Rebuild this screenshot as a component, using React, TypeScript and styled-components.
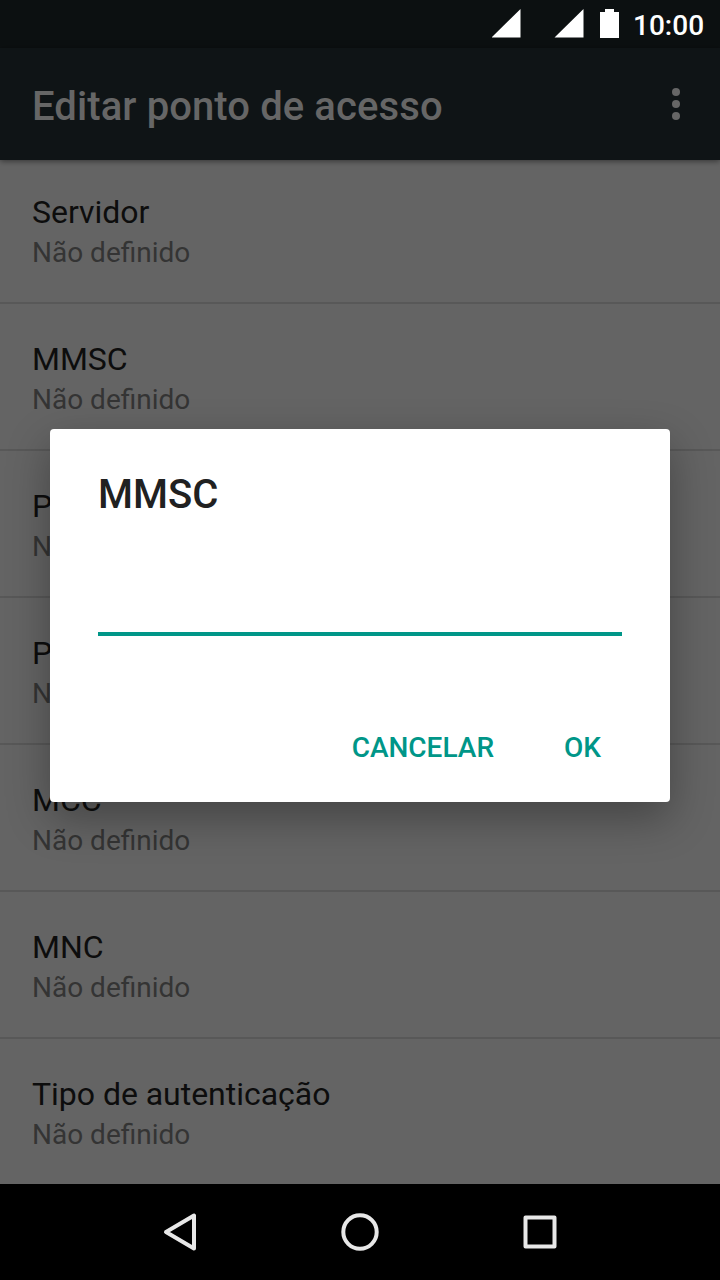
import React from 'react';
import styled, { createGlobalStyle } from 'styled-components';

const GlobalStyle = createGlobalStyle`
  * { box-sizing: border-box; }
  body { margin: 0; background: #000; font-family: Roboto, sans-serif; }
`;
const Screen = styled.div`
  position: relative;
  width: 720px;
  height: 1280px;
  overflow: hidden;
  display: flex;
  flex-direction: column;
  background: #646464;
`;
const StatusBar = styled.header`
  height: 48px;
  flex: none;
  display: flex;
  justify-content: flex-end;
  background: #0c1011;
`;
const StatusIcons = styled.svg`
  display: block;
  width: 140px;
  height: 48px;
`;
const Clock = styled.time`
  width: 88px;
  padding-left: 1px;
  color: #fff;
  font-size: 28px;
  font-weight: 500;
  line-height: 52px;
  white-space: nowrap;
`;
const Toolbar = styled.div`
  height: 112px;
  flex: none;
  display: flex;
  align-items: center;
  justify-content: space-between;
  padding: 6px 32px 0;
  background: #0f1416;
  box-shadow: 0 1px 6px rgba(0, 0, 0, 0.5);
  z-index: 1;
`;
const Title = styled.h1`
  margin: 0;
  color: #666;
  font-size: 40px;
  line-height: 48px;
  font-weight: 500;
  letter-spacing: 0.1px;
`;
const MenuDots = styled.svg`
  width: 24px;
  height: 48px;
`;
const List = styled.main`
  flex: 1;
  margin-top: -3px;
  overflow: hidden;
`;
const Row = styled.section`
  height: 147px;
  padding: 36px 32px 0;
  border-bottom: 2px solid #585858;
`;
const RowTitle = styled.div`
  color: #0d0d0d;
  font-size: 32px;
  line-height: 38px;
  letter-spacing: -0.03px;
`;
const RowValue = styled.div`
  margin-top: 5px;
  color: #343434;
  font-size: 28px;
  line-height: 34px;
  font-variant-ligatures: common-ligatures;
`;
const NavBar = styled.nav`
  height: 96px;
  flex: none;
  display: flex;
  justify-content: center;
  background: #000;
`;
const NavIcon = styled.svg`
  width: 180px;
  height: 96px;
`;
const Dialog = styled.div`
  position: absolute;
  left: 50px;
  top: 429px;
  width: 620px;
  height: 373px;
  display: flex;
  flex-direction: column;
  padding: 42px 48px 0;
  border-radius: 4px;
  background: #fff;
  box-shadow: 0 16px 44px rgba(0, 0, 0, 0.32);
  z-index: 2;
`;
const DialogTitle = styled.h2`
  margin: 0;
  color: #212121;
  font-size: 40px;
  line-height: 48px;
  font-weight: 500;
`;
const Field = styled.div`
  height: 117px;
  border-bottom: 4px solid #009688;
`;
const Actions = styled.div`
  display: flex;
  justify-content: flex-end;
  gap: 70px;
  padding: 95px 21px 0 0;
`;
const Action = styled.div`
  color: #009688;
  font-size: 28px;
  line-height: 34px;
  font-weight: 500;
`;

const settings = ['Servidor', 'MMSC', 'Proxy', 'Porta', 'MCC', 'MNC', 'Tipo de autenticação'];

export default function App() {
  return (
    <Screen>
      <GlobalStyle />
      <StatusBar>
        <StatusIcons viewBox="492 0 140 48" fill="#fff">
          <path d="M520.500 9v28.500h-29zM583.500 9v28.500h-29zM605 9h9v3h5v26h-19V12h5z" />
        </StatusIcons>
        <Clock>10:00</Clock>
      </StatusBar>
      <Toolbar>
        <Title>Editar ponto de acesso</Title>
        <MenuDots viewBox="0 0 24 48" fill="#666">
          <circle cx="12" cy="9" r="4" />
          <circle cx="12" cy="21" r="4" />
          <circle cx="12" cy="33" r="4" />
        </MenuDots>
      </Toolbar>
      <List>
        {settings.map((name) => (
          <Row key={name}>
            <RowTitle>{name}</RowTitle>
            <RowValue>Não definido</RowValue>
          </Row>
        ))}
      </List>
      <NavBar>
        <NavIcon viewBox="90 1184 180 96" fill="none" stroke="#e8e8e8" strokeWidth="4" strokeLinejoin="round">
          <path d="M194 1215.500v33l-28-16.500z" />
        </NavIcon>
        <NavIcon viewBox="270 1184 180 96" fill="none" stroke="#e8e8e8" strokeWidth="4">
          <circle cx="360" cy="1232" r="16.700" />
        </NavIcon>
        <NavIcon viewBox="450 1184 180 96" fill="none" stroke="#e8e8e8" strokeWidth="4" strokeLinejoin="round">
          <rect x="525.500" y="1217.500" width="29" height="29" />
        </NavIcon>
      </NavBar>
      <Dialog>
        <DialogTitle>MMSC</DialogTitle>
        <Field />
        <Actions>
          <Action>CANCELAR</Action>
          <Action>OK</Action>
        </Actions>
      </Dialog>
    </Screen>
  );
}
